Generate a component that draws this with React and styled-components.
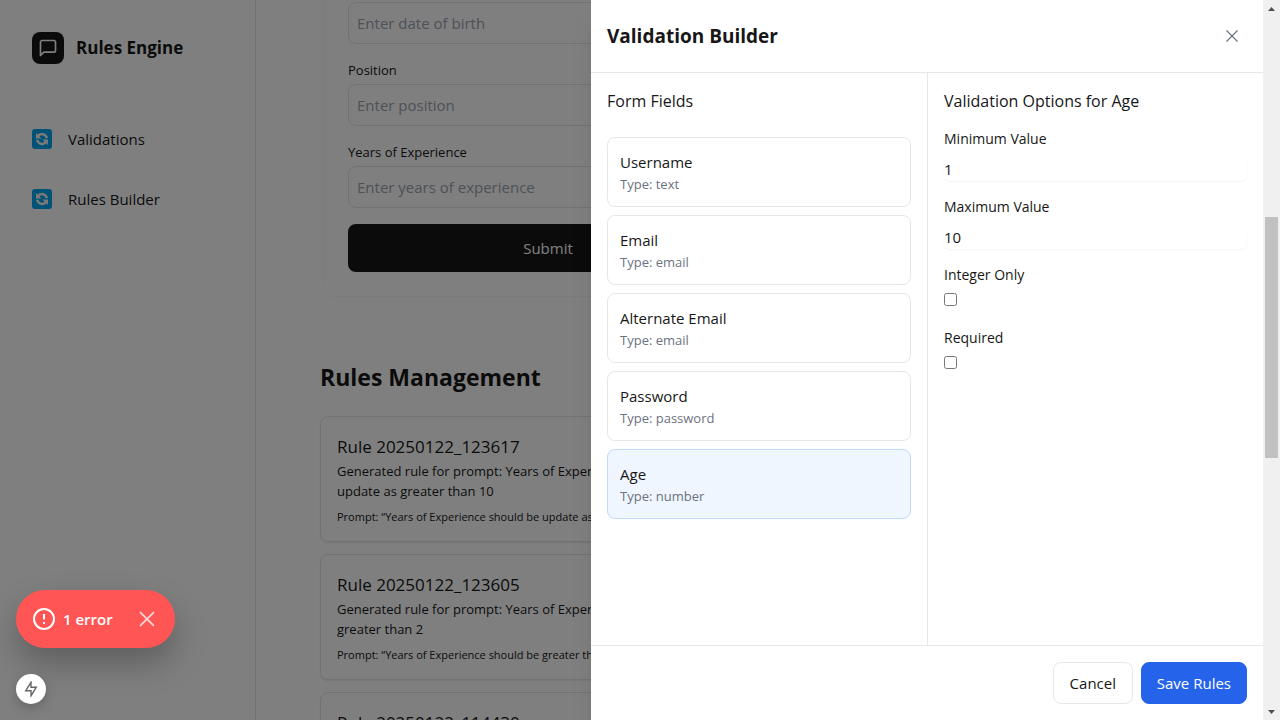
import React, { useState } from "react";
import styled, { createGlobalStyle } from "styled-components";

const GlobalStyle = createGlobalStyle`
  *, *::before, *::after { box-sizing: border-box; }
  body { margin: 0; background: #fff; color: #171717; }
  body, button, input { font-family: "Open Sans", "Noto Sans", sans-serif; font-size: 15px; line-height: 24px; }
  h1, h2, h3, p, ul { margin: 0; padding: 0; }
  ul { list-style: none; }
  button { cursor: pointer; }
`;

const Shell = styled.div`
  display: flex;
  height: 100vh;
  overflow: hidden;
`;

const Viewport = styled.div`
  position: relative;
  flex: 1;
  min-width: 0;
  overflow: hidden;
`;

const Page = styled.div`
  display: flex;
  height: 100%;
`;

const Sidebar = styled.aside`
  flex: none;
  width: 256px;
  padding: 32px;
  border-right: 1px solid #e5e5e5;
`;

const Brand = styled.div`
  display: flex;
  align-items: center;
  gap: 12px;
  margin-bottom: 60px;
`;

const BrandMark = styled.span`
  display: grid;
  place-items: center;
  width: 32px;
  height: 32px;
  border-radius: 8px;
  background: #171717;
  color: #fff;
`;

const BrandName = styled.h1`
  font-size: 17px;
  font-weight: 700;
  line-height: 32px;
`;

const NavList = styled.ul`
  display: grid;
  gap: 30px;
`;

const NavLink = styled.a`
  display: flex;
  align-items: center;
  gap: 16px;
  height: 30px;
  color: #171717;
  text-decoration: none;
`;

const Main = styled.main`
  flex: 1;
  min-width: 0;
  padding: 0 64px;
`;

const Column = styled.div`
  max-width: 456px;
`;

const FormCard = styled.form`
  display: grid;
  gap: 16px;
  margin: 0 3px 64px;
  padding: 2px 24px 24px;
  border: 1px solid #f7f7f7;
  border-top: 0;
  border-radius: 0 0 12px 12px;
`;

const Field = styled.label`
  display: grid;
  gap: 4px;
  font-size: 13px;
  font-weight: 500;
  line-height: 20px;
`;

const TextInput = styled.input`
  width: 100%;
  height: 42px;
  padding: 8px;
  border: 1px solid #e5e5e5;
  border-radius: 8px;
  background: transparent;
  &::placeholder { color: #9ca3af; opacity: 1; }
`;

const SubmitButton = styled.button`
  height: 48px;
  border: 0;
  border-radius: 8px;
  background: #171717;
  color: #fff;
`;

const SectionTitle = styled.h2`
  margin-bottom: 23px;
  font-size: 23px;
  font-weight: 700;
  line-height: 32px;
`;

const RuleList = styled.ul`
  display: grid;
  gap: 12px;
`;

const RuleCard = styled.li`
  padding: 16px 56px 16px 16px;
  border: 1px solid #e5e5e5;
  border-radius: 8px;
  box-shadow: 0 1px 2px rgba(0, 0, 0, 0.08);
`;

const RuleName = styled.h3`
  font-size: 17px;
  font-weight: 500;
  line-height: 28px;
`;

const RuleText = styled.p`
  font-size: 13px;
  line-height: 20px;
`;

const RulePrompt = styled.p`
  margin-top: 8px;
  overflow: hidden;
  font-size: 11px;
  line-height: 16px;
  white-space: nowrap;
`;

const Backdrop = styled.div`
  position: absolute;
  inset: 0;
  background: rgba(0, 0, 0, 0.5);
`;

const Drawer = styled.section`
  position: absolute;
  inset: 0 0 0 auto;
  display: flex;
  flex-direction: column;
  width: 672px;
  max-width: 100%;
  background: #fff;
  box-shadow: 0 20px 25px -5px rgba(0, 0, 0, 0.1), 0 8px 10px -6px rgba(0, 0, 0, 0.1);
`;

const DrawerHeader = styled.header`
  display: flex;
  align-items: center;
  justify-content: space-between;
  height: 73px;
  padding: 0 16px;
  border-bottom: 1px solid #e5e7eb;
`;

const DrawerTitle = styled.h2`
  font-size: 19px;
  font-weight: 700;
  line-height: 28px;
`;

const IconButton = styled.button`
  display: grid;
  place-items: center;
  width: 30px;
  height: 30px;
  padding: 0;
  border: 0;
  background: transparent;
  color: #6b7280;
`;

const DrawerBody = styled.div`
  display: grid;
  grid-template-columns: 337fr 335fr;
  flex: 1;
  min-height: 0;
`;

const Pane = styled.div`
  padding: 16px;
  border-right: ${(p) => (p.$divided ? "1px solid #e5e7eb" : "0")};
`;

const PaneTitle = styled.h3`
  margin-bottom: ${(p) => (p.$gap === "wide" ? "24px" : "16px")};
  font-size: 16px;
  font-weight: 500;
  line-height: 24px;
`;

const FieldList = styled.ul`
  display: grid;
  gap: 8px;
`;

const FieldCard = styled.button`
  display: block;
  width: 100%;
  height: 70px;
  padding: 12px;
  border: 1px solid ${(p) => (p.$active ? "#bfdbfe" : "#e5e7eb")};
  border-radius: 8px;
  background: ${(p) => (p.$active ? "#eff6ff" : "#fff")};
  color: #171717;
  text-align: left;
`;

const FieldName = styled.span`
  display: block;
  font-weight: 500;
  line-height: 24px;
`;

const FieldType = styled.span`
  display: block;
  color: #6b7280;
  font-size: 13px;
  line-height: 20px;
`;

const Options = styled.div`
  display: grid;
  gap: 16px;
`;

const Option = styled.label`
  display: block;
  font-size: 14px;
  font-weight: 500;
  line-height: 20px;
`;

const NumberInput = styled.input`
  display: block;
  width: 100%;
  height: 24px;
  margin-top: 8px;
  padding: 0;
  border: 0;
  border-radius: 6px;
  background: #fff;
  color: #171717;
  box-shadow: 0 1px 2px rgba(0, 0, 0, 0.05);
  appearance: textfield;
`;

const Checkbox = styled.input`
  display: block;
  width: 13px;
  height: 13px;
  margin: 8px 0 6px;
`;

const DrawerFooter = styled.footer`
  display: flex;
  justify-content: flex-end;
  gap: 8px;
  padding: 16px;
  border-top: 1px solid #e5e7eb;
`;

const ActionButton = styled.button`
  height: 42px;
  min-width: 80px;
  padding: 0 15px;
  border: 1px solid ${(p) => (p.$primary ? "#2563eb" : "#e5e7eb")};
  border-radius: 8px;
  background: ${(p) => (p.$primary ? "#2563eb" : "#fff")};
  color: ${(p) => (p.$primary ? "#fff" : "#171717")};
`;

const Toast = styled.div`
  position: absolute;
  bottom: 72px;
  left: 16px;
  display: flex;
  align-items: center;
  height: 58px;
  padding: 0 13px 0 16px;
  border-radius: 29px;
  background: #ff5555;
  color: #fff;
  box-shadow: 0 16px 32px rgba(0, 0, 0, 0.25);
`;

const ToastText = styled.span`
  margin: 0 19px 0 7px;
  font-weight: 600;
`;

const ToastClose = styled(IconButton)`
  color: #fff;
  opacity: 0.75;
`;

const DevBadge = styled.button`
  position: absolute;
  bottom: 16px;
  left: 16px;
  display: grid;
  place-items: center;
  width: 30px;
  height: 30px;
  padding: 0;
  border: 0;
  border-radius: 50%;
  background: #fff;
  color: #666;
  box-shadow: 0 4px 12px rgba(0, 0, 0, 0.2);
`;

const ScrollRail = styled.div`
  display: flex;
  flex: none;
  flex-direction: column;
  align-items: center;
  width: 17px;
  background: #f0f0f0;
`;

const ScrollArrow = styled.span`
  display: grid;
  place-items: center;
  width: 17px;
  height: 17px;
`;

const ScrollTrack = styled.div`
  flex: 1;
  width: 13px;
  padding-top: 200px;
`;

const ScrollThumb = styled.div`
  height: 241px;
  background: #c1c1c1;
`;

const MessageIcon = () => (
  <svg width="20" height="20" viewBox="0 0 24 24" fill="none" stroke="currentColor" strokeWidth="2" strokeLinecap="round" strokeLinejoin="round" aria-hidden="true">
    <path d="M21 15a2 2 0 0 1-2 2H7l-4 4V5a2 2 0 0 1 2-2h14a2 2 0 0 1 2 2z" />
  </svg>
);

const SyncIcon = () => (
  <svg width="20" height="20" viewBox="0 0 20 20" aria-hidden="true">
    <rect width="20" height="20" rx="3" fill="#00a6ed" />
    <g fill="none" stroke="#f4f4f4" strokeWidth="2.4">
      <path d="M5.8 7.2A5 5 0 0 1 14.8 9.2" />
      <path d="M14.2 12.8A5 5 0 0 1 5.2 10.8" />
    </g>
    <path d="M4 4v5.5h5.5zM16 16v-5.5h-5.5z" fill="#f4f4f4" />
  </svg>
);

const CloseIcon = ({ size, width }) => (
  <svg width={size} height={size} viewBox="0 0 24 24" fill="none" stroke="currentColor" strokeWidth={width} strokeLinecap="round" aria-hidden="true">
    <path d="M5 5l14 14M19 5L5 19" />
  </svg>
);

const AlertIcon = () => (
  <svg width="24" height="24" viewBox="0 0 24 24" fill="none" stroke="currentColor" strokeWidth="2" aria-hidden="true">
    <circle cx="12" cy="12" r="10" />
    <path d="M12 7v5.5M12 15v2" />
  </svg>
);

const BoltIcon = () => (
  <svg width="16" height="16" viewBox="0 0 16 16" fill="none" stroke="currentColor" strokeWidth="1.4" strokeLinejoin="miter" aria-hidden="true">
    <path d="M8 1.2v5h5.3L8 14.8v-5H2.7z" />
  </svg>
);

const formInputs = [
  { label: "", placeholder: "Enter date of birth" },
  { label: "Position", placeholder: "Enter position" },
  { label: "Years of Experience", placeholder: "Enter years of experience" },
];

const rules = [
  {
    name: "Rule 20250122_123617",
    text: "Generated rule for prompt: Years of Experience should be update as greater than 10",
    prompt: "Prompt: “Years of Experience should be update as greater than 10”",
  },
  {
    name: "Rule 20250122_123605",
    text: "Generated rule for prompt: Years of Experience should be greater than 2",
    prompt: "Prompt: “Years of Experience should be greater than 2”",
  },
  { name: "Rule 20250122_114430", text: "", prompt: "" },
];

const fields = [
  { name: "Username", type: "text" },
  { name: "Email", type: "email" },
  { name: "Alternate Email", type: "email" },
  { name: "Password", type: "password" },
  { name: "Age", type: "number" },
];

export default function App() {
  const [selected, setSelected] = useState("Age");

  return (
    <Shell>
      <GlobalStyle />
      <Viewport>
        <Page>
          <Sidebar>
            <Brand>
              <BrandMark><MessageIcon /></BrandMark>
              <BrandName>Rules Engine</BrandName>
            </Brand>
            <nav>
              <NavList>
                <li><NavLink href="#validations"><SyncIcon />Validations</NavLink></li>
                <li><NavLink href="#rules"><SyncIcon />Rules Builder</NavLink></li>
              </NavList>
            </nav>
          </Sidebar>
          <Main>
            <Column>
              <FormCard>
                {formInputs.map((f) => (
                  <Field key={f.placeholder}>
                    {f.label}
                    <TextInput placeholder={f.placeholder} aria-label={f.label || "Date of Birth"} />
                  </Field>
                ))}
                <SubmitButton type="button">Submit</SubmitButton>
              </FormCard>
              <SectionTitle>Rules Management</SectionTitle>
              <RuleList>
                {rules.map((r) => (
                  <RuleCard key={r.name}>
                    <RuleName>{r.name}</RuleName>
                    <RuleText>{r.text}</RuleText>
                    <RulePrompt>{r.prompt}</RulePrompt>
                  </RuleCard>
                ))}
              </RuleList>
            </Column>
          </Main>
        </Page>
        <Backdrop />
        <Drawer role="dialog" aria-label="Validation Builder">
          <DrawerHeader>
            <DrawerTitle>Validation Builder</DrawerTitle>
            <IconButton aria-label="Close"><CloseIcon size={18} width={1.5} /></IconButton>
          </DrawerHeader>
          <DrawerBody>
            <Pane $divided>
              <PaneTitle $gap="wide">Form Fields</PaneTitle>
              <FieldList>
                {fields.map((f) => (
                  <li key={f.name}>
                    <FieldCard $active={f.name === selected} onClick={() => setSelected(f.name)}>
                      <FieldName>{f.name}</FieldName>
                      <FieldType>Type: {f.type}</FieldType>
                    </FieldCard>
                  </li>
                ))}
              </FieldList>
            </Pane>
            <Pane>
              <PaneTitle>Validation Options for {selected}</PaneTitle>
              <Options>
                <Option>Minimum Value<NumberInput type="number" defaultValue="1" /></Option>
                <Option>Maximum Value<NumberInput type="number" defaultValue="10" /></Option>
                <Option>Integer Only<Checkbox type="checkbox" /></Option>
                <Option>Required<Checkbox type="checkbox" /></Option>
              </Options>
            </Pane>
          </DrawerBody>
          <DrawerFooter>
            <ActionButton>Cancel</ActionButton>
            <ActionButton $primary>Save Rules</ActionButton>
          </DrawerFooter>
        </Drawer>
        <Toast role="alert">
          <AlertIcon />
          <ToastText>1 error</ToastText>
          <ToastClose aria-label="Dismiss"><CloseIcon size={22} width={2} /></ToastClose>
        </Toast>
        <DevBadge aria-label="Developer tools"><BoltIcon /></DevBadge>
      </Viewport>
      <ScrollRail aria-hidden="true">
        <ScrollArrow><svg width="7" height="4" viewBox="0 0 7 4"><path d="M0 4L3.5 0L7 4z" fill="#505050" /></svg></ScrollArrow>
        <ScrollTrack><ScrollThumb /></ScrollTrack>
        <ScrollArrow><svg width="7" height="4" viewBox="0 0 7 4"><path d="M0 0L3.5 4L7 0z" fill="#505050" /></svg></ScrollArrow>
      </ScrollRail>
    </Shell>
  );
}
